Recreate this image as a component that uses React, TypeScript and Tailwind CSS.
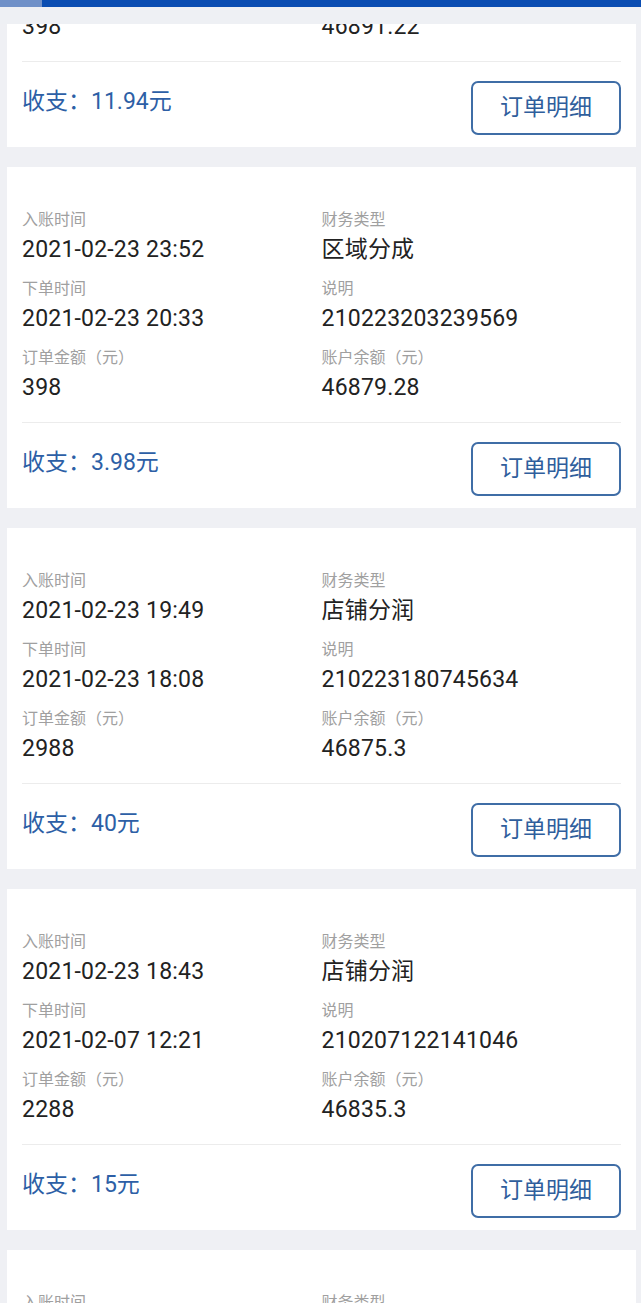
import React from "react";

type Rec = {
  inTime: string;
  type: string;
  orderTime: string;
  desc: string;
  amount: string;
  balance: string;
  income: string;
};

const records: Rec[] = [
  { inTime: "2021-02-23 23:55", type: "区域分成", orderTime: "2021-02-23 21:10", desc: "210223211012345", amount: "398", balance: "46891.22", income: "11.94元" },
  { inTime: "2021-02-23 23:52", type: "区域分成", orderTime: "2021-02-23 20:33", desc: "210223203239569", amount: "398", balance: "46879.28", income: "3.98元" },
  { inTime: "2021-02-23 19:49", type: "店铺分润", orderTime: "2021-02-23 18:08", desc: "210223180745634", amount: "2988", balance: "46875.3", income: "40元" },
  { inTime: "2021-02-23 18:43", type: "店铺分润", orderTime: "2021-02-07 12:21", desc: "210207122141046", amount: "2288", balance: "46835.3", income: "15元" },
  { inTime: "2021-02-23 18:40", type: "店铺分润", orderTime: "2021-02-07 12:20", desc: "210207122011046", amount: "2288", balance: "46820.3", income: "15元" },
];

function Cell({ label, value }: { label: string; value: string }) {
  return (
    <div className="flex flex-col">
      <div className="text-[16px] leading-[20px] text-[#a0a0a0]">{label}</div>
      <div className="mt-[5px] text-[23px] leading-[30px] text-[#222222] tracking-[0.2px]">{value}</div>
    </div>
  );
}

function Card({ r }: { r: Rec }) {
  return (
    <div className="ml-[7px] w-[629px] h-[341px] bg-white px-[15px] pt-[43px] flex flex-col">
      <div className="grid grid-cols-2 gap-y-[14px]">
        <Cell label="入账时间" value={r.inTime} />
        <Cell label="财务类型" value={r.type} />
        <Cell label="下单时间" value={r.orderTime} />
        <Cell label="说明" value={r.desc} />
        <Cell label="订单金额（元）" value={r.amount} />
        <Cell label="账户余额（元）" value={r.balance} />
      </div>
      <div className="mt-[19px] h-px bg-[#ececec]" />
      <div className="mt-[19px] flex items-start justify-between">
        <div className="mt-[6px] text-[23px] leading-[30px] text-[#2d5fa6]">收支：{r.income}</div>
        <button className="w-[150px] h-[54px] rounded-[7px] border-2 border-[#3f6da6] bg-white text-[23px] leading-[30px] text-[#2f5e9c]">
          订单明细
        </button>
      </div>
    </div>
  );
}

export default function App() {
  return (
    <div
      className="relative w-[641px] h-[1303px] overflow-hidden bg-[#eff0f4]"
      style={{ fontFamily: 'Roboto, "Noto Sans CJK SC", "Noto Sans", sans-serif' }}
    >
      <div className="-mt-[194px] flex flex-col gap-[20px]">
        {records.map((r, i) => (
          <Card key={i} r={r} />
        ))}
      </div>
      <div className="absolute top-0 left-0 right-0 h-[24px] bg-[#eef0f4] flex flex-col">
        <div className="h-[7px] flex">
          <div className="w-[42px] bg-[#6f90c8]" />
          <div className="flex-1 bg-[#0a4db2]" />
        </div>
      </div>
    </div>
  );
}
